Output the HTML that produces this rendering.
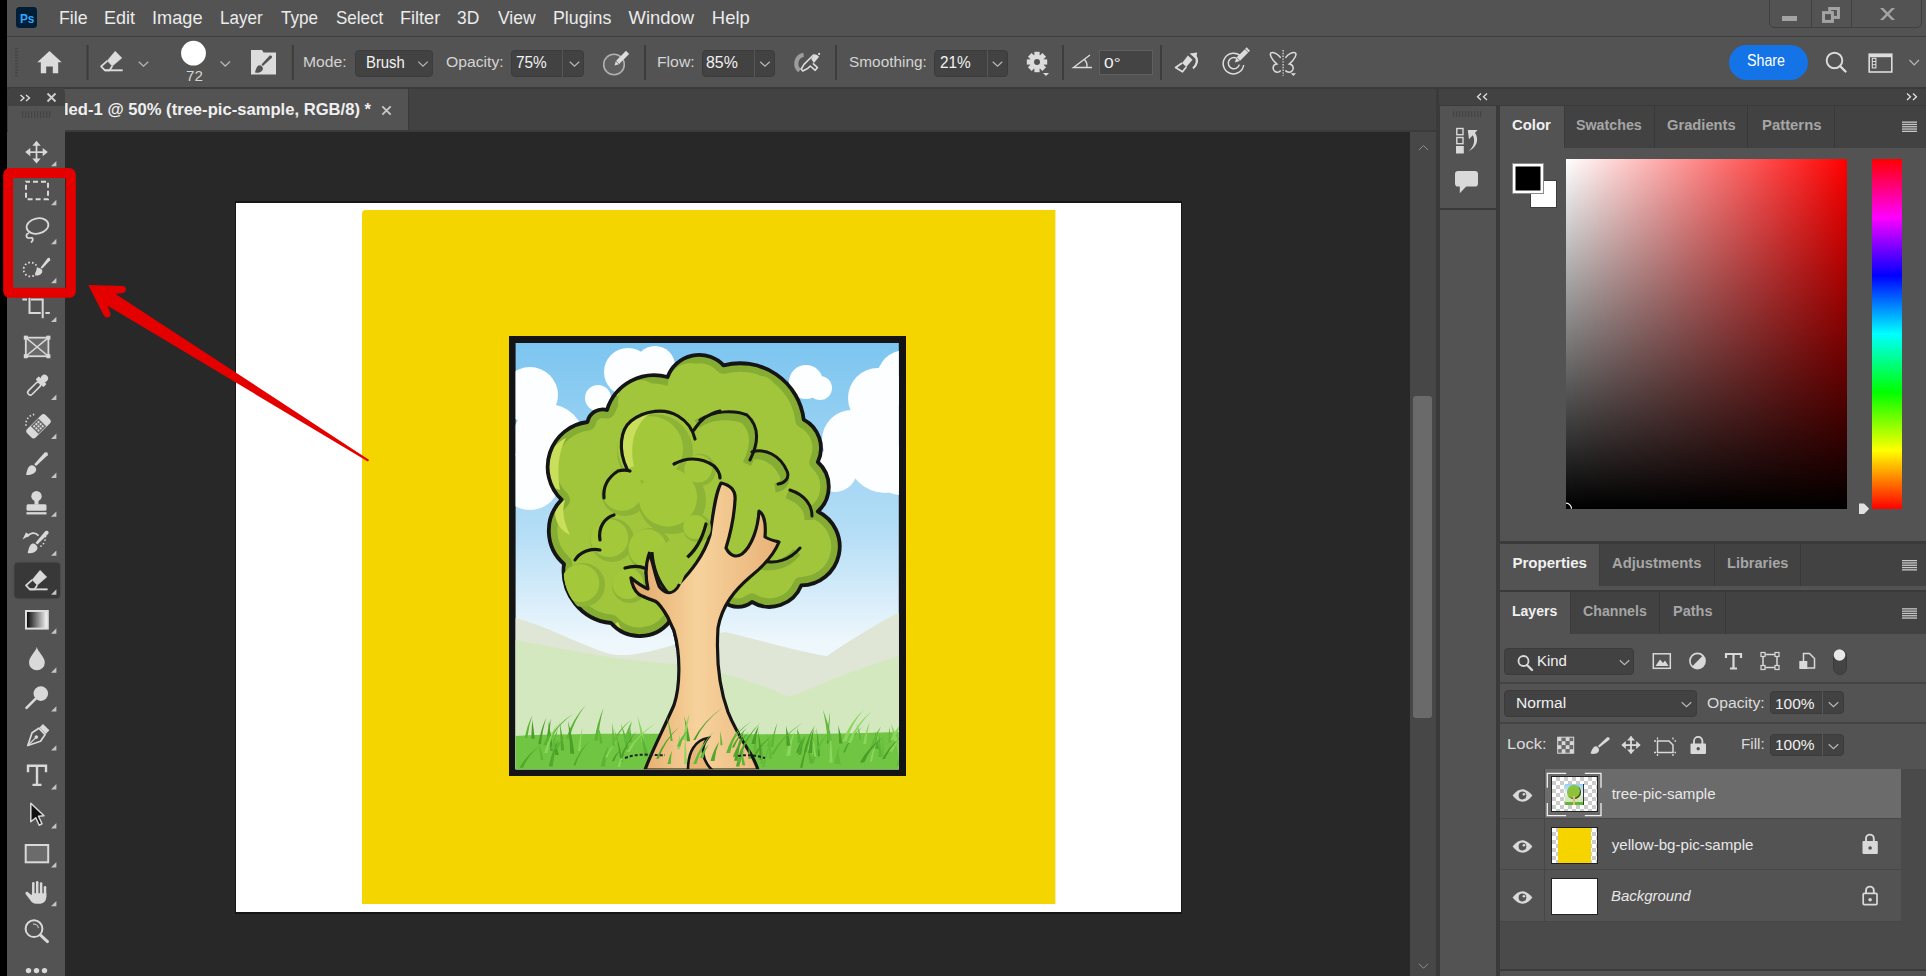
<!DOCTYPE html>
<html><head><meta charset="utf-8">
<style>
*{margin:0;padding:0;box-sizing:border-box}
html,body{width:1926px;height:976px;overflow:hidden;background:#535353}
body{position:relative;font-family:"Liberation Sans",sans-serif;color:#e6e6e6}
.a{position:absolute}
.t{position:absolute;white-space:nowrap;line-height:1}
svg.o{position:absolute;left:0;top:0;width:1926px;height:976px;overflow:visible}
</style></head><body>
<div class="a" style="left:0;top:0;width:7px;height:976px;background:#000"></div>
<div class="a" style="left:7px;top:0;width:1919px;height:36px;background:#535353"></div>
<div class="a" style="left:7px;top:36px;width:1919px;height:1px;background:#3e3e3e"></div>
<div class="a" style="left:7px;top:37px;width:1919px;height:50px;background:#535353"></div>
<div class="a" style="left:7px;top:87px;width:1919px;height:2px;background:#3a3a3a"></div>
<div class="a" style="left:7px;top:89px;width:1429px;height:41px;background:#424242"></div>
<div class="a" style="left:7px;top:130px;width:1429px;height:2px;background:#3b3b3b"></div>
<div class="a" style="left:62px;top:89px;width:346px;height:41px;background:#535353"></div>
<div class="a" style="left:408px;top:89px;width:1px;height:41px;background:#3a3a3a"></div>
<div class="a" style="left:65px;top:132px;width:1345px;height:844px;background:#282828"></div>
<div class="a" style="left:1410px;top:132px;width:26px;height:844px;background:#474747"></div>
<div class="a" style="left:1413px;top:396px;width:19px;height:322px;background:#6a6a6a;border-radius:3px"></div>
<div class="a" style="left:1436px;top:89px;width:3px;height:887px;background:#3a3a3a"></div>
<div class="t" style="left:58.98px;top:9.05px;font-size:18.44px;font-weight:normal;color:#ebebeb;transform:scaleX(0.9614);transform-origin:0 0;">File</div>
<div class="t" style="left:104.07px;top:9.05px;font-size:18.44px;font-weight:normal;color:#ebebeb;transform:scaleX(0.9726);transform-origin:0 0;">Edit</div>
<div class="t" style="left:152.16px;top:9.05px;font-size:18.44px;font-weight:normal;color:#ebebeb;transform:scaleX(0.9854);transform-origin:0 0;">Image</div>
<div class="t" style="left:219.94px;top:9.05px;font-size:18.44px;font-weight:normal;color:#ebebeb;transform:scaleX(0.9234);transform-origin:0 0;">Layer</div>
<div class="t" style="left:280.86px;top:9.05px;font-size:18.44px;font-weight:normal;color:#ebebeb;transform:scaleX(0.9272);transform-origin:0 0;">Type</div>
<div class="t" style="left:335.82px;top:9.05px;font-size:18.44px;font-weight:normal;color:#ebebeb;transform:scaleX(0.9200);transform-origin:0 0;">Select</div>
<div class="t" style="left:399.75px;top:9.05px;font-size:18.44px;font-weight:normal;color:#ebebeb;transform:scaleX(0.9808);transform-origin:0 0;">Filter</div>
<div class="t" style="left:457.38px;top:9.05px;font-size:18.44px;font-weight:normal;color:#ebebeb;transform:scaleX(0.9444);transform-origin:0 0;">3D</div>
<div class="t" style="left:498.20px;top:9.05px;font-size:18.44px;font-weight:normal;color:#ebebeb;transform:scaleX(0.9505);transform-origin:0 0;">View</div>
<div class="t" style="left:552.68px;top:9.05px;font-size:18.44px;font-weight:normal;color:#ebebeb;transform:scaleX(0.9651);transform-origin:0 0;">Plugins</div>
<div class="t" style="left:628.60px;top:9.05px;font-size:18.44px;font-weight:normal;color:#ebebeb;">Window</div>
<div class="t" style="left:711.83px;top:9.05px;font-size:18.44px;font-weight:normal;color:#ebebeb;">Help</div>
<div class="a" style="left:16px;top:7px;width:21px;height:20.5px;background:#001e36;border-radius:3.5px"></div>
<div class="t" style="left:19.99px;top:11.67px;font-size:13.41px;font-weight:bold;color:#31a8ff;transform:scaleX(0.8802);transform-origin:0 0;">Ps</div>
<div class="a" style="left:1769px;top:-4px;width:153px;height:32px;border:1.5px solid #404040;border-radius:5px"></div>
<div class="a" style="left:1810.5px;top:0;width:1.2px;height:27px;background:#404040"></div>
<div class="a" style="left:1851.2px;top:0;width:1.2px;height:27px;background:#404040"></div>
<div class="a" style="left:1782px;top:16px;width:15px;height:5px;background:#a3a3a3"></div>
<div class="a" style="left:355px;top:50px;width:78.0px;height:26.5px;background:#424242;border:1px solid #3b3b3b;border-radius:4px"></div>
<div class="a" style="left:510.7px;top:50px;width:73.5px;height:26.5px;background:#424242;border:1px solid #3b3b3b;border-radius:4px"></div>
<div class="a" style="left:562.4px;top:50px;width:1px;height:26.5px;background:#565656"></div>
<div class="a" style="left:701.7px;top:50px;width:73.7px;height:26.5px;background:#424242;border:1px solid #3b3b3b;border-radius:4px"></div>
<div class="a" style="left:753.5px;top:50px;width:1px;height:26.5px;background:#565656"></div>
<div class="a" style="left:933.5px;top:50px;width:74.8px;height:26.5px;background:#424242;border:1px solid #3b3b3b;border-radius:4px"></div>
<div class="a" style="left:986.5px;top:50px;width:1px;height:26.5px;background:#565656"></div>
<div class="a" style="left:1099px;top:50px;width:54px;height:24.5px;background:#444;border:1px solid #5f5f5f"></div>
<div class="t" style="left:185.74px;top:69.39px;font-size:14.66px;font-weight:normal;color:#d4d4d4;transform:scaleX(1.0402);transform-origin:0 0;">72</div>
<div class="t" style="left:302.74px;top:53.99px;font-size:15.36px;font-weight:normal;color:#d4d4d4;transform:scaleX(1.0219);transform-origin:0 0;">Mode:</div>
<div class="t" style="left:365.81px;top:54.19px;font-size:16.06px;font-weight:normal;color:#f2f2f2;transform:scaleX(0.9253);transform-origin:0 0;">Brush</div>
<div class="t" style="left:446.17px;top:53.99px;font-size:15.36px;font-weight:normal;color:#d4d4d4;transform:scaleX(1.0223);transform-origin:0 0;">Opacity:</div>
<div class="t" style="left:515.63px;top:54.55px;font-size:15.64px;font-weight:normal;color:#f2f2f2;transform:scaleX(0.9844);transform-origin:0 0;">75%</div>
<div class="t" style="left:656.74px;top:53.99px;font-size:15.36px;font-weight:normal;color:#d4d4d4;transform:scaleX(1.0256);transform-origin:0 0;">Flow:</div>
<div class="t" style="left:706.16px;top:54.55px;font-size:15.64px;font-weight:normal;color:#f2f2f2;transform:scaleX(1.0157);transform-origin:0 0;">85%</div>
<div class="t" style="left:849.09px;top:53.99px;font-size:15.36px;font-weight:normal;color:#d4d4d4;">Smoothing:</div>
<div class="t" style="left:939.63px;top:54.55px;font-size:15.64px;font-weight:normal;color:#f2f2f2;transform:scaleX(0.9844);transform-origin:0 0;">21%</div>
<div class="t" style="left:1104.48px;top:54.59px;font-size:15.36px;font-weight:normal;color:#f2f2f2;transform:scaleX(1.1272);transform-origin:0 0;">0°</div>
<div class="a" style="left:1729px;top:45px;width:79px;height:35px;background:#1473e6;border-radius:17.5px"></div>
<div class="t" style="left:1747.43px;top:53.33px;font-size:15.78px;font-weight:normal;color:#fff;transform:scaleX(0.9044);transform-origin:0 0;">Share</div>
<div class="t" style="left:63.50px;top:100.71px;font-size:17.32px;font-weight:bold;color:#efefef;transform:scaleX(0.9598);transform-origin:0 0;">led-1 @ 50% (tree-pic-sample, RGB/8) *</div>
<div class="a" style="left:8px;top:88px;width:57.4px;height:888px;background:#535353;border-radius:5px 5px 0 0"></div>
<div class="a" style="left:8px;top:88px;width:57.4px;height:18px;background:#424242;border-radius:5px 5px 0 0"></div>
<svg class="o" viewBox="0 0 1926 976"><path d="M20.5 95 L24 98 L20.5 101 M26 95 L29.5 98 L26 101" stroke="#e0e0e0" stroke-width="1.3" fill="none"/><path d="M47.5 93.5 L55.5 101.5 M55.5 93.5 L47.5 101.5" stroke="#d0d0d0" stroke-width="1.8" fill="none"/><rect x="22" y="111" width="1.2" height="7" fill="#444"/><rect x="25" y="111" width="1.2" height="7" fill="#444"/><rect x="28" y="111" width="1.2" height="7" fill="#444"/><rect x="31" y="111" width="1.2" height="7" fill="#444"/><rect x="34" y="111" width="1.2" height="7" fill="#444"/><rect x="37" y="111" width="1.2" height="7" fill="#444"/><rect x="40" y="111" width="1.2" height="7" fill="#444"/><rect x="43" y="111" width="1.2" height="7" fill="#444"/><rect x="46" y="111" width="1.2" height="7" fill="#444"/><rect x="49" y="111" width="1.2" height="7" fill="#444"/><rect x="15" y="48" width="3" height="1.6" fill="#464646"/><rect x="15" y="51" width="3" height="1.6" fill="#464646"/><rect x="15" y="54" width="3" height="1.6" fill="#464646"/><rect x="15" y="57" width="3" height="1.6" fill="#464646"/><rect x="15" y="60" width="3" height="1.6" fill="#464646"/><rect x="15" y="63" width="3" height="1.6" fill="#464646"/><rect x="15" y="66" width="3" height="1.6" fill="#464646"/><rect x="15" y="69" width="3" height="1.6" fill="#464646"/><rect x="15" y="72" width="3" height="1.6" fill="#464646"/><rect x="15" y="75" width="3" height="1.6" fill="#464646"/><g fill="#d9d9d9"><rect x="28" y="151.29999999999998" width="17" height="1.7"/><rect x="35.65" y="142.6" width="1.7" height="19"/><polygon points="36.5,140.7 32.3,145.79999999999998 40.7,145.79999999999998"/><polygon points="36.5,163.6 32.3,158.5 40.7,158.5"/><polygon points="25.2,152.1 30.3,147.9 30.3,156.29999999999998"/><polygon points="47.8,152.1 42.7,147.9 42.7,156.29999999999998"/></g><polygon points="51,166.29999999999998 56.4,166.29999999999998 56.4,160.89999999999998" fill="#c4c4c4"/><rect x="26" y="181.65" width="22" height="17.6" fill="none" stroke="#d9d9d9" stroke-width="2" stroke-dasharray="5 3" stroke-dashoffset="1"/><polygon points="51,205.25 56.4,205.25 56.4,199.85" fill="#c4c4c4"/><g fill="none" stroke="#d9d9d9" stroke-width="1.8"><ellipse cx="37.5" cy="226.0" rx="11" ry="7.6" transform="rotate(-12 37.5 226.0)"/><path d="M29 233.0 C25 234.0 26 239.0 30 238.0 C33 237.0 34 240.0 31 242.5"/></g><polygon points="51,244.2 56.4,244.2 56.4,238.79999999999998" fill="#c4c4c4"/><circle cx="30.6" cy="269.45" r="7" fill="none" stroke="#d9d9d9" stroke-width="1.8" stroke-dasharray="1.6 2.2"/><g transform="translate(35 275.45) rotate(40.5) scale(0.74)"><path d="M0 0 C3 -2 5.2 -5 4.8 -8.6 C4.5 -10.8 2.8 -12 0.6 -12 C-2.2 -12 -3.6 -10.3 -3.4 -8 C-3.1 -5 -1.4 -2.6 0 0 Z" fill="#d9d9d9"/><path d="M-1.3 -13.2 L-2.1 -29 Q0 -32.6 2.1 -29 L1.3 -13.2 Z" fill="#d9d9d9"/></g><polygon points="51,283.15 56.4,283.15 56.4,277.75" fill="#c4c4c4"/><path d="M22.4 299.5 H27 M29.5 297.5 V313.0 H40.8 M31 299.5 H42.7 V318.29999999999995 M45.4 313.0 H49.8" fill="none" stroke="#d9d9d9" stroke-width="2"/><polygon points="51,322.09999999999997 56.4,322.09999999999997 56.4,316.7" fill="#c4c4c4"/><rect x="25.8" y="337.65000000000003" width="22.6" height="18.6" fill="#6a6a6a" stroke="#d9d9d9" stroke-width="1.8"/><path d="M25.8 337.65000000000003 L48.4 356.25 M48.4 337.65000000000003 L25.8 356.25" stroke="#d9d9d9" stroke-width="1.5"/><rect x="23.8" y="335.65000000000003" width="4" height="4" fill="#d9d9d9"/><rect x="46.4" y="335.65000000000003" width="4" height="4" fill="#d9d9d9"/><rect x="23.8" y="354.25" width="4" height="4" fill="#d9d9d9"/><rect x="46.4" y="354.25" width="4" height="4" fill="#d9d9d9"/><g transform="translate(37 385.8) rotate(45)"><circle cx="0" cy="-10.5" r="3.6" fill="#d9d9d9"/><rect x="-5.5" y="-8" width="11" height="4.5" rx="1" fill="#d9d9d9"/><rect x="-2.6" y="-4" width="5.2" height="16" rx="2.6" fill="none" stroke="#d9d9d9" stroke-width="1.6"/></g><polygon points="51,400.0 56.4,400.0 56.4,394.6" fill="#c4c4c4"/><g transform="translate(38.5 426.25) rotate(45)"><rect x="-6" y="-13" width="12" height="26" rx="3" fill="#d9d9d9"/><rect x="-5.5" y="-5.5" width="11" height="11" fill="#6a6a6a"/><circle cx="-3" cy="-3" r="1.1" fill="#d9d9d9"/><circle cx="-3" cy="0" r="1.1" fill="#d9d9d9"/><circle cx="-3" cy="3" r="1.1" fill="#d9d9d9"/><circle cx="0" cy="-3" r="1.1" fill="#d9d9d9"/><circle cx="0" cy="0" r="1.1" fill="#d9d9d9"/><circle cx="0" cy="3" r="1.1" fill="#d9d9d9"/><circle cx="3" cy="-3" r="1.1" fill="#d9d9d9"/><circle cx="3" cy="0" r="1.1" fill="#d9d9d9"/><circle cx="3" cy="3" r="1.1" fill="#d9d9d9"/></g><path d="M26 425.75 A 10 10 0 0 1 35 414.25" fill="none" stroke="#d9d9d9" stroke-width="1.6" stroke-dasharray="1.5 2"/><polygon points="51,438.95 56.4,438.95 56.4,433.55" fill="#c4c4c4"/><g transform="translate(26 474.70000000000005) rotate(44) scale(1.0)"><path d="M0 0 C3 -2 5.2 -5 4.8 -8.6 C4.5 -10.8 2.8 -12 0.6 -12 C-2.2 -12 -3.6 -10.3 -3.4 -8 C-3.1 -5 -1.4 -2.6 0 0 Z" fill="#d9d9d9"/><path d="M-1.3 -13.2 L-2.1 -29 Q0 -32.6 2.1 -29 L1.3 -13.2 Z" fill="#d9d9d9"/></g><polygon points="51,477.90000000000003 56.4,477.90000000000003 56.4,472.50000000000006" fill="#c4c4c4"/><g fill="#d9d9d9"><circle cx="36.5" cy="496.15" r="5.2"/><rect x="34.5" y="499.65" width="4" height="5"/><rect x="26.5" y="504.15" width="20" height="6.5" rx="1.5"/><rect x="26.5" y="512.15" width="20" height="2.3"/></g><polygon points="51,516.85 56.4,516.85 56.4,511.45000000000005" fill="#c4c4c4"/><g transform="translate(27.7 553.0) rotate(43) scale(0.97)"><path d="M0 0 C3 -2 5.2 -5 4.8 -8.6 C4.5 -10.8 2.8 -12 0.6 -12 C-2.2 -12 -3.6 -10.3 -3.4 -8 C-3.1 -5 -1.4 -2.6 0 0 Z" fill="#d9d9d9"/><path d="M-1.3 -13.2 L-2.1 -29 Q0 -32.6 2.1 -29 L1.3 -13.2 Z" fill="#d9d9d9"/></g><path d="M38.5 535.6 C35 531.6 30 532.6 27 536.6" fill="none" stroke="#d9d9d9" stroke-width="1.8"/><polygon points="22.5,539.6 30,535.1 26,532.6" fill="#d9d9d9"/><circle cx="45.5" cy="536.6" r="0.9" fill="#d9d9d9"/><circle cx="45" cy="540.1" r="0.9" fill="#d9d9d9"/><circle cx="43.5" cy="543.6" r="0.9" fill="#d9d9d9"/><circle cx="41" cy="546.1" r="0.9" fill="#d9d9d9"/><polygon points="51,555.8000000000001 56.4,555.8000000000001 56.4,550.4000000000001" fill="#c4c4c4"/><rect x="14" y="562.1500000000001" width="46.5" height="36.6" rx="4" fill="#383838" stroke="#4a4a4a" stroke-width="1"/><g transform="translate(25.2 570.35) scale(1.0)"><path d="M14.9 0 L21.5 6.7 L12 14.8 L7 9.5 Z" fill="#d9d9d9" stroke="#d9d9d9" stroke-width="0.6" stroke-linejoin="round"/><path d="M7 9.5 L0.8 15.1 L4.6 19 L9.3 19 L12 14.8" fill="none" stroke="#d9d9d9" stroke-width="1.8" stroke-linejoin="round"/><path d="M4.6 19 H22.4" stroke="#d9d9d9" stroke-width="1.9"/></g><polygon points="51,594.7500000000001 56.4,594.7500000000001 56.4,589.3500000000001" fill="#c4c4c4"/><defs><linearGradient id="gr1" x1="0" x2="1" y1="0" y2="0"><stop offset="0" stop-color="#000"/><stop offset="1" stop-color="#fff"/></linearGradient></defs><rect x="26" y="611.0" width="21.8" height="17.6" fill="url(#gr1)" stroke="#dedede" stroke-width="2"/><polygon points="51,633.7 56.4,633.7 56.4,628.3000000000001" fill="#c4c4c4"/><path d="M36.8 646.95 C37.5 651.45 44.8 656.45 44.8 662.45 A7.9 7.9 0 0 1 29 662.45 C29 656.45 36 651.45 36.8 646.95Z" fill="#d9d9d9"/><polygon points="51,672.6500000000001 56.4,672.6500000000001 56.4,667.2500000000001" fill="#c4c4c4"/><circle cx="40.8" cy="693.6000000000001" r="7.3" fill="#d9d9d9"/><path d="M35.5 698.9000000000001 L26.5 707.9000000000001" stroke="#d9d9d9" stroke-width="2.6" stroke-linecap="round"/><polygon points="51,711.6000000000001 56.4,711.6000000000001 56.4,706.2000000000002" fill="#c4c4c4"/><g transform="translate(37 736.35) rotate(45)"><rect x="-4.5" y="-13" width="9" height="5" fill="#d9d9d9"/><path d="M-4.5 -7 L4.5 -7 L6 1 L0 13 L-6 1 Z" fill="none" stroke="#d9d9d9" stroke-width="1.7" stroke-linejoin="round"/><circle cx="0" cy="1" r="1.8" fill="#d9d9d9"/><path d="M0 1 V13" stroke="#d9d9d9" stroke-width="1.2"/></g><polygon points="51,750.5500000000001 56.4,750.5500000000001 56.4,745.1500000000001" fill="#c4c4c4"/><path d="M28 772.3000000000001 V765.7 H46 V772.3000000000001 M37 765.7 V784.9000000000001 M32.5 784.9000000000001 H41.5" fill="none" stroke="#d9d9d9" stroke-width="2.4"/><polygon points="51,789.5000000000001 56.4,789.5000000000001 56.4,784.1000000000001" fill="#c4c4c4"/><path d="M30.8 803.2500000000001 L44 815.7500000000001 L38.5 816.2500000000001 L42 823.7500000000001 L39.2 825.2500000000001 L35.8 817.7500000000001 L30.8 821.7500000000001 Z" fill="#111" stroke="#d9d9d9" stroke-width="1.5" stroke-linejoin="round"/><polygon points="51,828.4500000000002 56.4,828.4500000000002 56.4,823.0500000000002" fill="#c4c4c4"/><rect x="25.7" y="845.0" width="22.5" height="17.3" fill="#6b6b6b" stroke="#d9d9d9" stroke-width="2"/><polygon points="51,867.4000000000001 56.4,867.4000000000001 56.4,862.0000000000001" fill="#c4c4c4"/><g stroke="#d9d9d9" stroke-width="2.5" stroke-linecap="round"><path d="M33.3 883.1500000000001 V895.1500000000001"/><path d="M37.2 882.1500000000001 V895.1500000000001"/><path d="M41.1 883.5500000000001 V895.1500000000001"/><path d="M45 887.3500000000001 V896.1500000000001"/></g><path d="M32 893.1500000000001 H46.3 V896.6500000000001 C46.3 901.1500000000001 43.5 903.7500000000001 39 903.7500000000001 H36.5 C33.5 903.7500000000001 31.5 902.1500000000001 30 899.7500000000001 L25.6 893.95 C25 892.1500000000001 26.6 891.1500000000001 28 892.1500000000001 L31.5 895.1500000000001 Z" fill="#d9d9d9"/><polygon points="51,906.3500000000001 56.4,906.3500000000001 56.4,900.9500000000002" fill="#c4c4c4"/><circle cx="34" cy="928.7" r="8.4" fill="none" stroke="#d9d9d9" stroke-width="2"/><path d="M40.5 935.1 L47.5 941.6" stroke="#d9d9d9" stroke-width="3" stroke-linecap="round"/><path d="M33 924.1 A5 5 0 0 1 38.5 928.1" fill="none" stroke="#d9d9d9" stroke-width="1"/><circle cx="28.5" cy="970.6" r="2.7" fill="#d9d9d9"/><circle cx="36.5" cy="970.6" r="2.7" fill="#d9d9d9"/><circle cx="44.5" cy="970.6" r="2.7" fill="#d9d9d9"/></svg>
<svg class="o" viewBox="0 0 1926 976"><rect x="86.5" y="45" width="2" height="35" fill="#3d3d3d"/><rect x="291.8" y="45" width="2" height="35" fill="#3d3d3d"/><rect x="644" y="45" width="2" height="35" fill="#3d3d3d"/><rect x="835" y="45" width="2" height="35" fill="#3d3d3d"/><rect x="1062" y="45" width="2" height="35" fill="#3d3d3d"/><rect x="1160" y="45" width="2" height="35" fill="#3d3d3d"/><path d="M37.3 62.3 L49.5 51 L61.7 62.3 L58.2 62.3 L58.2 73.2 L52.8 73.2 L52.8 66.5 L46.2 66.5 L46.2 73.2 L40.8 73.2 L40.8 62.3 Z" fill="#dcdcdc"/><g transform="translate(100.3 51.3) scale(1.0)"><path d="M14.9 0 L21.5 6.7 L12 14.8 L7 9.5 Z" fill="#dcdcdc" stroke="#dcdcdc" stroke-width="0.6" stroke-linejoin="round"/><path d="M7 9.5 L0.8 15.1 L4.6 19 L9.3 19 L12 14.8" fill="none" stroke="#dcdcdc" stroke-width="1.8" stroke-linejoin="round"/><path d="M4.6 19 H22.4" stroke="#dcdcdc" stroke-width="1.9"/></g><path d="M138.75 61.75 L143.5 66.25 L148.25 61.75" fill="none" stroke="#b8b8b8" stroke-width="1.2"/><circle cx="193.5" cy="53.2" r="12.4" fill="#fff"/><path d="M220.55 61.55 L225.3 66.05 L230.05 61.55" fill="none" stroke="#b8b8b8" stroke-width="1.2"/><path d="M251 50 H262 L263.5 52.5 H276 V74.6 H251 Z" fill="#dcdcdc"/><g transform="translate(255 72.5) rotate(45) scale(0.77)"><path d="M0 0 C3 -2 5.2 -5 4.8 -8.6 C4.5 -10.8 2.8 -12 0.6 -12 C-2.2 -12 -3.6 -10.3 -3.4 -8 C-3.1 -5 -1.4 -2.6 0 0 Z" fill="#535353"/><path d="M-1.3 -13.2 L-2.1 -29 Q0 -32.6 2.1 -29 L1.3 -13.2 Z" fill="#535353"/></g><path d="M418.25 61.65 L423 66.15 L427.75 61.65" fill="none" stroke="#b8b8b8" stroke-width="1.2"/><path d="M569.75 61.75 L574.5 66.25 L579.25 61.75" fill="none" stroke="#b8b8b8" stroke-width="1.2"/><path d="M760.25 61.75 L765 66.25 L769.75 61.75" fill="none" stroke="#b8b8b8" stroke-width="1.2"/><path d="M992.75 61.75 L997.5 66.25 L1002.25 61.75" fill="none" stroke="#b8b8b8" stroke-width="1.2"/><circle cx="614" cy="64.5" r="10.3" fill="#5f5f5f" stroke="#b0b0b0" stroke-width="1.6"/><g transform="translate(620.5 59.5) rotate(45)"><rect x="-2.2" y="-10" width="4.4" height="14" fill="#dcdcdc"/><polygon points="-2.2,4.5 2.2,4.5 0,8.5" fill="#dcdcdc"/></g><path d="M803.6 54.8 A 9 9 0 0 0 799.6 70.6" fill="none" stroke="#9c9c9c" stroke-width="4.2"/><path d="M811.2 59.1 L814.5 54.2 Q817 54 819.1 56.8 L813.9 63.1 Z" fill="#dcdcdc"/><circle cx="819.1" cy="53.9" r="1.1" fill="#dcdcdc"/><path d="M813.9 54.5 L804 64.4 L801.2 69 L802.8 71 L808 68.2 L810.3 66 L815.2 70.3 L817.5 67.6 L812.9 63.4" fill="none" stroke="#dcdcdc" stroke-width="1.6" stroke-linejoin="round"/><rect x="1034.4" y="51.8" width="5.2" height="5" transform="rotate(0 1037 62)" fill="#dcdcdc"/><rect x="1034.4" y="51.8" width="5.2" height="5" transform="rotate(45 1037 62)" fill="#dcdcdc"/><rect x="1034.4" y="51.8" width="5.2" height="5" transform="rotate(90 1037 62)" fill="#dcdcdc"/><rect x="1034.4" y="51.8" width="5.2" height="5" transform="rotate(135 1037 62)" fill="#dcdcdc"/><rect x="1034.4" y="51.8" width="5.2" height="5" transform="rotate(180 1037 62)" fill="#dcdcdc"/><rect x="1034.4" y="51.8" width="5.2" height="5" transform="rotate(225 1037 62)" fill="#dcdcdc"/><rect x="1034.4" y="51.8" width="5.2" height="5" transform="rotate(270 1037 62)" fill="#dcdcdc"/><rect x="1034.4" y="51.8" width="5.2" height="5" transform="rotate(315 1037 62)" fill="#dcdcdc"/><circle cx="1037" cy="62" r="7.2" fill="#dcdcdc"/><circle cx="1037" cy="62" r="3" fill="#535353"/><polygon points="1043,73 1049,73 1046,76" fill="#dcdcdc"/><path d="M1090 55 L1073.5 67.5 H1092 M1084.5 59.5 A 9 9 0 0 1 1086.8 67.5" fill="none" stroke="#dcdcdc" stroke-width="1.4"/><path d="M1182.1 62.9 L1187.9 55.5 L1192.5 59.8 L1186.3 67 Z" fill="#dcdcdc"/><path d="M1182.1 62.9 L1175.6 67.6 L1182.5 71.8 L1186.3 67" fill="none" stroke="#dcdcdc" stroke-width="1.8" stroke-linejoin="round"/><path d="M1193 68.3 C1197 65 1198.5 59.5 1195 56" fill="none" stroke="#dcdcdc" stroke-width="2.2"/><polygon points="1189.6,53.4 1197.2,52.5 1196,59" fill="#dcdcdc"/><path d="M1241 56.5 A10.3 10.3 0 1 0 1243.7 65" fill="none" stroke="#dcdcdc" stroke-width="1.5"/><path d="M1236.5 58.2 A5.6 5.6 0 1 0 1239.3 64.6" fill="none" stroke="#dcdcdc" stroke-width="1.5"/><g transform="translate(1240.2 57.2) rotate(45)"><rect x="-2.4" y="-9" width="4.8" height="11.5" fill="#dcdcdc"/><rect x="-2.4" y="-11.5" width="4.8" height="2" fill="#dcdcdc"/><polygon points="-2.4,3 2.4,3 0,7.6" fill="#dcdcdc"/></g><path d="M1280.7 57.8 C1278 54 1273 51.5 1271 52.8 C1269.5 54 1271 59 1276.7 63.9 C1272 64.5 1272.5 70 1275 71.5 C1277 72.8 1279.5 72 1280.7 70.5 M1285.4 57.8 C1288 54 1293 51.5 1295.3 52.8 C1297 54 1295 59 1289.5 63.9 C1294 64.5 1294 70 1291.5 71.5 C1289.5 72.8 1286.5 72 1285.4 70.5" fill="none" stroke="#dcdcdc" stroke-width="1.5"/><path d="M1283.1 50 V76" stroke="#dcdcdc" stroke-width="1.3" stroke-dasharray="1.4 1.4"/><polygon points="1290.8,73.3 1296,73.3 1293.4,76" fill="#dcdcdc"/><circle cx="1834.5" cy="60.5" r="7.8" fill="none" stroke="#dcdcdc" stroke-width="1.9"/><path d="M1840 66 L1845.5 71.5" stroke="#dcdcdc" stroke-width="2.4" stroke-linecap="round"/><rect x="1869.2" y="54.2" width="22.6" height="17.8" fill="none" stroke="#dcdcdc" stroke-width="1.6"/><rect x="1869.2" y="54.2" width="22.6" height="3" fill="#dcdcdc"/><rect x="1872.3" y="58.3" width="3.6" height="9.6" fill="none" stroke="#dcdcdc" stroke-width="1.1"/><path d="M1872.3 61.5 H1875.9 M1872.3 64.7 H1875.9" stroke="#dcdcdc" stroke-width="1"/><path d="M1909.45 60.0 L1914.2 65.0 L1918.95 60.0" fill="none" stroke="#b8b8b8" stroke-width="1.2"/><rect x="1829.7" y="8.5" width="8.7" height="8.9" fill="none" stroke="#a3a3a3" stroke-width="3"/><rect x="1823.5" y="12.6" width="8.9" height="8.8" fill="#535353" stroke="#a3a3a3" stroke-width="3"/><polygon points="1880,8 1883.3,8 1887.5,12.3 1891.7,8 1895,8 1889.2,14 1895,20 1891.7,20 1887.5,15.7 1883.3,20 1880,20 1885.8,14" fill="#a3a3a3"/><path d="M382.3 106.3 L390.7 114.7 M390.7 106.3 L382.3 114.7" stroke="#c8c8c8" stroke-width="1.8"/><path d="M1419 150 L1423.5 145.5 L1428 150" fill="none" stroke="#8f8f8f" stroke-width="1"/><path d="M1419.0 963.75 L1423.5 968.25 L1428.0 963.75" fill="none" stroke="#8f8f8f" stroke-width="1"/></svg>
<div class="a" style="left:1439px;top:89px;width:487px;height:887px;background:#3a3a3a;"></div>
<div class="a" style="left:1439px;top:89px;width:487px;height:16px;background:#424242;"></div>
<div class="a" style="left:1439.5px;top:106px;width:56px;height:102px;background:#535353;"></div>
<div class="a" style="left:1439.5px;top:210px;width:56px;height:766px;background:#535353;"></div>
<div class="a" style="left:1499.5px;top:106px;width:426px;height:435px;background:#535353;"></div>
<div class="a" style="left:1499.5px;top:106px;width:426px;height:41.5px;background:#424242;"></div>
<div class="a" style="left:1499.5px;top:106px;width:64px;height:41.5px;background:#535353;"></div>
<div class="a" style="left:1499.5px;top:544px;width:426px;height:46px;background:#535353;"></div>
<div class="a" style="left:1499.5px;top:544px;width:426px;height:41.6px;background:#424242;"></div>
<div class="a" style="left:1499.5px;top:544px;width:99.5px;height:41.6px;background:#535353;"></div>
<div class="a" style="left:1499.5px;top:592.4px;width:426px;height:377px;background:#535353;"></div>
<div class="a" style="left:1499.5px;top:592.4px;width:426px;height:41.2px;background:#424242;"></div>
<div class="a" style="left:1499.5px;top:592.4px;width:71px;height:41.2px;background:#535353;"></div>
<div class="a" style="left:1499.5px;top:971px;width:426px;height:5px;background:#535353;"></div>
<div class="a" style="left:1653.5px;top:106px;width:1px;height:41.5px;background:#383838;"></div>
<div class="a" style="left:1747.4px;top:106px;width:1px;height:41.5px;background:#383838;"></div>
<div class="a" style="left:1833.7px;top:106px;width:1px;height:41.5px;background:#383838;"></div>
<div class="a" style="left:1713.7px;top:544px;width:1px;height:41.5px;background:#383838;"></div>
<div class="a" style="left:1800.2px;top:544px;width:1px;height:41.5px;background:#383838;"></div>
<div class="a" style="left:1659.3px;top:592.4px;width:1px;height:41.5px;background:#383838;"></div>
<div class="a" style="left:1725.4px;top:592.4px;width:1px;height:41.5px;background:#383838;"></div>
<div class="a" style="left:1563.6px;top:106px;width:1px;height:41.5px;background:#3c3c3c;"></div>
<div class="a" style="left:1599px;top:544px;width:1px;height:41.5px;background:#3c3c3c;"></div>
<div class="a" style="left:1570.4px;top:592.4px;width:1px;height:41.5px;background:#3c3c3c;"></div>
<div class="t" style="left:1512.01px;top:116.93px;font-size:15.08px;font-weight:bold;color:#f0f0f0;transform:scaleX(0.9860);transform-origin:0 0;">Color</div>
<div class="t" style="left:1575.71px;top:116.93px;font-size:15.08px;font-weight:bold;color:#a6a6a6;transform:scaleX(0.9456);transform-origin:0 0;">Swatches</div>
<div class="t" style="left:1667.11px;top:116.93px;font-size:15.08px;font-weight:bold;color:#a6a6a6;transform:scaleX(0.9746);transform-origin:0 0;">Gradients</div>
<div class="t" style="left:1761.51px;top:116.93px;font-size:15.08px;font-weight:bold;color:#a6a6a6;transform:scaleX(0.9863);transform-origin:0 0;">Patterns</div>
<div class="t" style="left:1512.40px;top:554.93px;font-size:15.08px;font-weight:bold;color:#f0f0f0;">Properties</div>
<div class="t" style="left:1612.00px;top:554.93px;font-size:15.08px;font-weight:bold;color:#a6a6a6;transform:scaleX(0.9801);transform-origin:0 0;">Adjustments</div>
<div class="t" style="left:1726.83px;top:554.93px;font-size:15.08px;font-weight:bold;color:#a6a6a6;transform:scaleX(0.9636);transform-origin:0 0;">Libraries</div>
<div class="t" style="left:1512.46px;top:603.13px;font-size:15.08px;font-weight:bold;color:#f0f0f0;transform:scaleX(0.9303);transform-origin:0 0;">Layers</div>
<div class="t" style="left:1583.43px;top:603.13px;font-size:15.08px;font-weight:bold;color:#a6a6a6;transform:scaleX(0.9394);transform-origin:0 0;">Channels</div>
<div class="t" style="left:1672.93px;top:603.13px;font-size:15.08px;font-weight:bold;color:#a6a6a6;transform:scaleX(0.9615);transform-origin:0 0;">Paths</div>
<div class="a" style="left:1566px;top:158.7px;width:281.4px;height:350px;background:#f00;background:linear-gradient(to top,#000,rgba(0,0,0,0)),linear-gradient(to right,#fff,#f00)"></div>
<div class="a" style="left:1872px;top:158.7px;width:29.5px;height:350px;background:#f00;background:linear-gradient(to bottom,#f00 0%,#f0f 16.67%,#00f 33.33%,#0ff 50%,#0f0 66.67%,#ff0 83.33%,#f00 100%)"></div>
<div class="a" style="left:1529.8px;top:180px;width:27.4px;height:28px;background:#fff;border:1px solid #3d3d3d"></div>
<div class="a" style="left:1512px;top:163.4px;width:31.7px;height:30.6px;background:#000;border:1px solid #8c8c8c;box-shadow:inset 0 0 0 2.5px #fff, inset 0 0 0 3.5px #000"></div>
<div class="a" style="left:1504px;top:648px;width:130.4px;height:27.3px;background:#424242;border:1px solid #3b3b3b;border-radius:4px"></div>
<div class="a" style="left:1499.5px;top:681.6px;width:426px;height:2px;background:#444;"></div>
<div class="a" style="left:1504px;top:690px;width:193.2px;height:27.2px;background:#424242;border:1px solid #3b3b3b;border-radius:4px"></div>
<div class="a" style="left:1769.6px;top:691px;width:74.7px;height:23.4px;background:#424242;border:1px solid #3b3b3b;border-radius:4px"></div>
<div class="a" style="left:1822.4px;top:691px;width:1px;height:23.4px;background:#565656;"></div>
<div class="a" style="left:1499.5px;top:722.4px;width:426px;height:2px;background:#444;"></div>
<div class="a" style="left:1769.6px;top:733.7px;width:74.7px;height:22.6px;background:#424242;border:1px solid #3b3b3b;border-radius:4px"></div>
<div class="a" style="left:1822.4px;top:733.7px;width:1px;height:22.6px;background:#565656;"></div>
<div class="a" style="left:1499.5px;top:768.6px;width:426px;height:200.5px;background:#4a4a4a;"></div>
<div class="a" style="left:1499.5px;top:768.6px;width:401.5px;height:152.5px;background:#535353;"></div>
<div class="a" style="left:1544px;top:768.6px;width:357px;height:49.1px;background:#6b6b6b;"></div>
<div class="a" style="left:1499.5px;top:817.7px;width:401.5px;height:1px;background:#474747;"></div>
<div class="a" style="left:1499.5px;top:869px;width:401.5px;height:1px;background:#474747;"></div>
<div class="a" style="left:1499.5px;top:920.6px;width:401.5px;height:1px;background:#474747;"></div>
<div class="a" style="left:1543.5px;top:768.6px;width:1px;height:152.5px;background:#474747;"></div>
<div class="a" style="left:1901px;top:768.6px;width:24px;height:200.5px;background:#4a4a4a;"></div>
<div class="a" style="left:1499.5px;top:969px;width:426px;height:2px;background:#3b3b3b;"></div>
<div class="a" style="left:1550.7px;top:775.8px;width:47.3px;height:36.7px;background:#fff;border:1px solid #222;background-color:#fff;background-image:linear-gradient(45deg,#ccc 25%,transparent 25%,transparent 75%,#ccc 75%),linear-gradient(45deg,#ccc 25%,transparent 25%,transparent 75%,#ccc 75%);background-size:8px 8px;background-position:0 0,4px 4px"></div>
<div class="a" style="left:1550.7px;top:827.2px;width:47.3px;height:36.5px;background:#fff;border:1px solid #222;background-color:#fff;background-image:linear-gradient(45deg,#ccc 25%,transparent 25%,transparent 75%,#ccc 75%),linear-gradient(45deg,#ccc 25%,transparent 25%,transparent 75%,#ccc 75%);background-size:8px 8px;background-position:0 0,4px 4px"></div>
<div class="a" style="left:1558px;top:828.2px;width:33.2px;height:34.5px;background:#f5d400;"></div>
<div class="a" style="left:1550.7px;top:878.2px;width:47.3px;height:36.4px;background:#fff;border:1px solid #222"></div>
<div class="a" style="left:1565px;top:784px;width:18.7px;height:21px;background:#cfe9f7;background:linear-gradient(#8fd0f5 0%,#e8f5fb 45%,#d3e8bf 65%,#cfe6b8 88%,#5cb835 88%)"></div>
<div class="a" style="left:1582.8px;top:784px;width:0.8px;height:21px;background:#333;"></div>
<div class="a" style="left:1567px;top:785px;width:13.5px;height:13.5px;border-radius:50%;background:#8fc23c;box-shadow:inset -1px -1px 0 #3a4a18"></div>
<div class="a" style="left:1572.5px;top:796px;width:2.2px;height:8.5px;background:#e8b777;"></div>
<div class="t" style="left:1536.81px;top:653.33px;font-size:15.08px;font-weight:normal;color:#f0f0f0;transform:scaleX(0.9881);transform-origin:0 0;">Kind</div>
<div class="t" style="left:1515.95px;top:695.23px;font-size:15.08px;font-weight:normal;color:#f0f0f0;transform:scaleX(1.0330);transform-origin:0 0;">Normal</div>
<div class="t" style="left:1707.17px;top:695.23px;font-size:15.08px;font-weight:normal;color:#dcdcdc;transform:scaleX(1.0431);transform-origin:0 0;">Opacity:</div>
<div class="t" style="left:1775.32px;top:695.73px;font-size:15.08px;font-weight:normal;color:#f0f0f0;transform:scaleX(1.0247);transform-origin:0 0;">100%</div>
<div class="t" style="left:1506.68px;top:736.03px;font-size:15.08px;font-weight:normal;color:#dcdcdc;transform:scaleX(1.0978);transform-origin:0 0;">Lock:</div>
<div class="t" style="left:1741.18px;top:736.03px;font-size:15.08px;font-weight:normal;color:#dcdcdc;transform:scaleX(1.0083);transform-origin:0 0;">Fill:</div>
<div class="t" style="left:1775.32px;top:737.03px;font-size:15.08px;font-weight:normal;color:#f0f0f0;transform:scaleX(1.0247);transform-origin:0 0;">100%</div>
<div class="t" style="left:1611.65px;top:785.83px;font-size:15.08px;font-weight:normal;color:#e8e8e8;">tree-pic-sample</div>
<div class="t" style="left:1611.80px;top:836.83px;font-size:15.08px;font-weight:normal;color:#e8e8e8;">yellow-bg-pic-sample</div>
<div class="t" style="left:1611.35px;top:887.83px;font-size:15.08px;font-weight:normal;font-style:italic;color:#e8e8e8;transform:scaleX(0.9893);transform-origin:0 0;">Background</div>
<svg class="o" viewBox="0 0 1926 976"><path d="M1487 93.5 L1483.5 96.8 L1487 100 M1481 93.5 L1477.5 96.8 L1481 100" stroke="#e0e0e0" stroke-width="1.3" fill="none"/><path d="M1907 93.5 L1910.5 96.8 L1907 100 M1913 93.5 L1916.5 96.8 L1913 100" stroke="#e0e0e0" stroke-width="1.3" fill="none"/><rect x="1453" y="111" width="1.2" height="6" fill="#444"/><rect x="1456" y="111" width="1.2" height="6" fill="#444"/><rect x="1459" y="111" width="1.2" height="6" fill="#444"/><rect x="1462" y="111" width="1.2" height="6" fill="#444"/><rect x="1465" y="111" width="1.2" height="6" fill="#444"/><rect x="1468" y="111" width="1.2" height="6" fill="#444"/><rect x="1471" y="111" width="1.2" height="6" fill="#444"/><rect x="1474" y="111" width="1.2" height="6" fill="#444"/><rect x="1477" y="111" width="1.2" height="6" fill="#444"/><rect x="1480" y="111" width="1.2" height="6" fill="#444"/><rect x="1456.8" y="128.5" width="6.2" height="6.2" fill="none" stroke="#d9d9d9" stroke-width="1.4"/><rect x="1456.8" y="137.5" width="6.2" height="6.2" fill="none" stroke="#d9d9d9" stroke-width="1.4"/><rect x="1456" y="146" width="7.8" height="7.5" fill="#d9d9d9"/><path d="M1468.5 151.2 C1476 148 1480 140 1474.8 132.5 L1472.2 134.5 C1476 140 1474 147 1468.5 151.2 Z" fill="#d9d9d9"/><polygon points="1467.8,130 1477.6,130 1469,139.2" fill="#d9d9d9"/><path d="M1458 171 H1475 Q1478 171 1478 174 V183.5 Q1478 186.6 1475 186.6 H1466.2 L1459.8 193.2 V186.6 H1458 Q1455 186.6 1455 183.5 V174 Q1455 171 1458 171 Z" fill="#d9d9d9"/><rect x="1902" y="121.5" width="15" height="1.3" fill="#c8c8c8"/><rect x="1902" y="123.8" width="15" height="1.3" fill="#c8c8c8"/><rect x="1902" y="126.1" width="15" height="1.3" fill="#c8c8c8"/><rect x="1902" y="128.4" width="15" height="1.3" fill="#c8c8c8"/><rect x="1902" y="130.7" width="15" height="1.3" fill="#c8c8c8"/><rect x="1902" y="560.0" width="15" height="1.3" fill="#c8c8c8"/><rect x="1902" y="562.3" width="15" height="1.3" fill="#c8c8c8"/><rect x="1902" y="564.6" width="15" height="1.3" fill="#c8c8c8"/><rect x="1902" y="566.9" width="15" height="1.3" fill="#c8c8c8"/><rect x="1902" y="569.2" width="15" height="1.3" fill="#c8c8c8"/><rect x="1902" y="608.2" width="15" height="1.3" fill="#c8c8c8"/><rect x="1902" y="610.5" width="15" height="1.3" fill="#c8c8c8"/><rect x="1902" y="612.8" width="15" height="1.3" fill="#c8c8c8"/><rect x="1902" y="615.1" width="15" height="1.3" fill="#c8c8c8"/><rect x="1902" y="617.4" width="15" height="1.3" fill="#c8c8c8"/><clipPath id="cf"><rect x="1566" y="158.7" width="281.4" height="350"/></clipPath><circle cx="1566" cy="508.7" r="5.5" fill="none" stroke="#fff" stroke-width="1.2" clip-path="url(#cf)"/><path d="M1859 503.5 H1864 L1869.2 508.7 L1864 514 H1859 Z" fill="#e0e0e0"/><circle cx="1523.5" cy="661" r="5" fill="none" stroke="#d9d9d9" stroke-width="1.8"/><path d="M1527 665 L1532 670" stroke="#d9d9d9" stroke-width="2.4" stroke-linecap="round"/><path d="M1619.75 660.25 L1624.5 664.75 L1629.25 660.25" fill="none" stroke="#b8b8b8" stroke-width="1.2"/><rect x="1653.3" y="653.8" width="17" height="14.5" fill="none" stroke="#d9d9d9" stroke-width="1.5"/><path d="M1655.5 666 L1660 659.5 L1663 663 L1665 660.5 L1668.5 666 Z" fill="#d9d9d9"/><circle cx="1697.5" cy="661" r="7.6" fill="none" stroke="#d9d9d9" stroke-width="1.6"/><path d="M1702.9 655.6 A7.6 7.6 0 0 1 1692.1 666.4 Z" fill="#d9d9d9"/><path d="M1726 658 V654 H1741 V658 M1733.5 654 V668.5 M1730 668.5 H1737" fill="none" stroke="#d9d9d9" stroke-width="2.2"/><rect x="1763" y="654.5" width="14" height="13" fill="none" stroke="#d9d9d9" stroke-width="1.5"/><rect x="1761" y="652.5" width="4" height="4" fill="#535353" stroke="#d9d9d9" stroke-width="1.2"/><rect x="1761" y="665.5" width="4" height="4" fill="#535353" stroke="#d9d9d9" stroke-width="1.2"/><rect x="1775" y="652.5" width="4" height="4" fill="#535353" stroke="#d9d9d9" stroke-width="1.2"/><rect x="1775" y="665.5" width="4" height="4" fill="#535353" stroke="#d9d9d9" stroke-width="1.2"/><path d="M1803.5 653.5 H1809.5 L1814.5 658.5 V668 H1803.5 Z" fill="none" stroke="#d9d9d9" stroke-width="1.5"/><rect x="1799.3" y="661" width="8" height="8" fill="#d9d9d9"/><rect x="1833.5" y="649.5" width="13" height="25" rx="6.5" fill="#444" stroke="#3a3a3a" stroke-width="1"/><circle cx="1839.5" cy="655" r="5.8" fill="#e8e8e8"/><path d="M1681.75 702.25 L1686.5 706.75 L1691.25 702.25" fill="none" stroke="#b8b8b8" stroke-width="1.2"/><path d="M1828.75 702.25 L1833.5 706.75 L1838.25 702.25" fill="none" stroke="#b8b8b8" stroke-width="1.2"/><path d="M1828.75 744.25 L1833.5 748.75 L1838.25 744.25" fill="none" stroke="#b8b8b8" stroke-width="1.2"/><rect x="1557.7" y="737.2" width="4" height="4" fill="#d9d9d9"/><rect x="1557.7" y="741.2" width="4" height="4" fill="#6a6a6a"/><rect x="1557.7" y="745.2" width="4" height="4" fill="#d9d9d9"/><rect x="1557.7" y="749.2" width="4" height="4" fill="#6a6a6a"/><rect x="1561.7" y="737.2" width="4" height="4" fill="#6a6a6a"/><rect x="1561.7" y="741.2" width="4" height="4" fill="#d9d9d9"/><rect x="1561.7" y="745.2" width="4" height="4" fill="#6a6a6a"/><rect x="1561.7" y="749.2" width="4" height="4" fill="#d9d9d9"/><rect x="1565.7" y="737.2" width="4" height="4" fill="#d9d9d9"/><rect x="1565.7" y="741.2" width="4" height="4" fill="#6a6a6a"/><rect x="1565.7" y="745.2" width="4" height="4" fill="#d9d9d9"/><rect x="1565.7" y="749.2" width="4" height="4" fill="#6a6a6a"/><rect x="1569.7" y="737.2" width="4" height="4" fill="#6a6a6a"/><rect x="1569.7" y="741.2" width="4" height="4" fill="#d9d9d9"/><rect x="1569.7" y="745.2" width="4" height="4" fill="#6a6a6a"/><rect x="1569.7" y="749.2" width="4" height="4" fill="#d9d9d9"/><rect x="1557.7" y="737.2" width="16" height="16" fill="none" stroke="#d9d9d9" stroke-width="1"/><g transform="translate(1590.5 753.5) rotate(50) scale(0.8)"><path d="M0 0 C3 -2 5.2 -5 4.8 -8.6 C4.5 -10.8 2.8 -12 0.6 -12 C-2.2 -12 -3.6 -10.3 -3.4 -8 C-3.1 -5 -1.4 -2.6 0 0 Z" fill="#d9d9d9"/><path d="M-1.3 -13.2 L-2.1 -29 Q0 -32.6 2.1 -29 L1.3 -13.2 Z" fill="#d9d9d9"/></g><g fill="#d9d9d9"><rect x="1622.5" y="744.2" width="17" height="1.8"/><rect x="1630.1" y="736.5" width="1.8" height="17"/><polygon points="1631,736 1627,740.5 1635,740.5"/><polygon points="1631,754 1627,749.5 1635,749.5"/><polygon points="1621.3,745 1625.8,741 1625.8,749"/><polygon points="1640.7,745 1636.2,741 1636.2,749"/></g><path d="M1657.5 741 H1669 L1673 745 V752.5 H1657.5 Z" fill="none" stroke="#d9d9d9" stroke-width="1.5"/><path d="M1654 741 H1656 M1657.5 737.5 V739.5 M1673 737.5 V739.5 M1674.5 741 H1676 M1654 752.5 H1656 M1657.5 754 V756 M1673 754 V756 M1674.5 752.5 H1676" stroke="#d9d9d9" stroke-width="1.3"/><path d="M1694 744 V741 A4.2 4.2 0 0 1 1702.4 741 V744" fill="none" stroke="#d9d9d9" stroke-width="1.8"/><rect x="1690.5" y="743.5" width="15.5" height="10.5" rx="1" fill="#d9d9d9"/><circle cx="1698.2" cy="748.8" r="1.7" fill="#535353"/><path d="M1512.6 795.5 Q1522.5 783.0 1532.4 795.5 Q1522.5 808.0 1512.6 795.5 Z" fill="#d9d9d9"/><circle cx="1522.5" cy="795.5" r="3.9" fill="#535353"/><circle cx="1523.9" cy="794.3" r="1.3" fill="#d9d9d9"/><path d="M1512.6 846.5 Q1522.5 834.0 1532.4 846.5 Q1522.5 859.0 1512.6 846.5 Z" fill="#d9d9d9"/><circle cx="1522.5" cy="846.5" r="3.9" fill="#535353"/><circle cx="1523.9" cy="845.3" r="1.3" fill="#d9d9d9"/><path d="M1512.6 897.5 Q1522.5 885.0 1532.4 897.5 Q1522.5 910.0 1512.6 897.5 Z" fill="#d9d9d9"/><circle cx="1522.5" cy="897.5" r="3.9" fill="#535353"/><circle cx="1523.9" cy="896.3" r="1.3" fill="#d9d9d9"/><path d="M1547.3 787.7 V773.3 H1566.2 M1584.8 773.3 H1601 V787.7 M1601 803 V815.7 H1584.8 M1566.2 815.7 H1547.3 V803" fill="none" stroke="#f0f0f0" stroke-width="1.3"/><path d="M1866 841 V838.5 A3.9 3.9 0 0 1 1873.8 838.5 V841" fill="none" stroke="#d9d9d9" stroke-width="1.9"/><rect x="1862.5" y="841" width="15.3" height="13" rx="1" fill="#d9d9d9"/><circle cx="1870.1" cy="848" r="1.8" fill="#535353"/><path d="M1866 893 V890.5 A3.9 3.9 0 0 1 1873.8 890.5 V893" fill="none" stroke="#d9d9d9" stroke-width="1.9"/><rect x="1863.2" y="893.4" width="13.8" height="11.2" rx="1" fill="none" stroke="#d9d9d9" stroke-width="1.7"/><circle cx="1870.1" cy="899.7" r="1.8" fill="#d9d9d9"/></svg>
<svg class="o" viewBox="0 0 1926 976"><defs>
<linearGradient id="sky" x1="0" y1="0" x2="0" y2="1"><stop offset="0" stop-color="#7cc5f0"/><stop offset="0.45" stop-color="#b6def6"/><stop offset="0.7" stop-color="#eef7fc"/><stop offset="1" stop-color="#f4f9fb"/></linearGradient>
<linearGradient id="trk" x1="0" y1="0" x2="1" y2="0"><stop offset="0" stop-color="#e2a767"/><stop offset="0.45" stop-color="#f7d29c"/><stop offset="1" stop-color="#e8b277"/></linearGradient>
<clipPath id="pic"><rect x="515.6" y="343" width="383.2" height="426.2"/></clipPath>
</defs><rect x="235" y="201" width="947" height="713" fill="#161616"/><rect x="236" y="203" width="945" height="709" fill="#fff"/><path d="M362 214 Q362 210 366 210 H1055.4 V903.9 H362 Z" fill="#f5d500"/><rect x="509" y="336" width="397" height="440" fill="#141414"/><g clip-path="url(#pic)"><rect x="515" y="343" width="385" height="427" fill="url(#sky)"/><circle cx="530" cy="395" r="28" fill="#fdfeff"/><circle cx="548" cy="440" r="36" fill="#fdfeff"/><circle cx="530" cy="480" r="30" fill="#fdfeff"/><circle cx="575" cy="470" r="25" fill="#fdfeff"/><circle cx="598" cy="398" r="13" fill="#fdfeff"/><circle cx="628" cy="372" r="24" fill="#fdfeff"/><circle cx="655" cy="366" r="20" fill="#fdfeff"/><circle cx="806" cy="382" r="17" fill="#fdfeff"/><circle cx="820" cy="388" r="12" fill="#fdfeff"/><circle cx="878" cy="398" r="30" fill="#fdfeff"/><circle cx="905" cy="378" r="28" fill="#fdfeff"/><circle cx="852" cy="440" r="30" fill="#fdfeff"/><circle cx="885" cy="455" r="38" fill="#fdfeff"/><circle cx="835" cy="470" r="22" fill="#fdfeff"/><circle cx="900" cy="470" r="25" fill="#fdfeff"/><path d="M515 618 C545 625 580 645 610 654 C640 660 680 640 725 632 C760 640 800 652 827 656 C850 640 880 622 900 612 V770 H515 Z" fill="#dfe6d6"/><path d="M515 640 C560 648 620 662 680 664 C700 668 740 675 790 697 C830 680 870 664 900 656 V770 H515 Z" fill="#d3e8bf"/><path d="M515 736 C620 731 760 737 900 732 V770 H515 Z" fill="#70c542"/><clipPath id="crown"><path d="M667.6 377 A33.6 33.6 0 0 1 723.6 365.4 A64.1 64.1 0 0 1 803.7 419.6 A32.2 32.2 0 0 1 817.8 462 A33.3 33.3 0 0 1 817.8 511.5 A38.9 38.9 0 0 1 801.3 585.4 A34.2 34.2 0 0 1 752 602 A22.7 22.7 0 0 1 723.6 601.8 L670 621 A38.1 38.1 0 0 1 611 623 A52.5 52.5 0 0 1 564 564 A44.0 44.0 0 0 1 561.6 499.7 A45.3 45.3 0 0 1 587.5 422 A15.6 15.6 0 0 1 607 410 A49.5 49.5 0 0 1 667.6 377 Z"/></clipPath><path d="M667.6 377 A33.6 33.6 0 0 1 723.6 365.4 A64.1 64.1 0 0 1 803.7 419.6 A32.2 32.2 0 0 1 817.8 462 A33.3 33.3 0 0 1 817.8 511.5 A38.9 38.9 0 0 1 801.3 585.4 A34.2 34.2 0 0 1 752 602 A22.7 22.7 0 0 1 723.6 601.8 L670 621 A38.1 38.1 0 0 1 611 623 A52.5 52.5 0 0 1 564 564 A44.0 44.0 0 0 1 561.6 499.7 A45.3 45.3 0 0 1 587.5 422 A15.6 15.6 0 0 1 607 410 A49.5 49.5 0 0 1 667.6 377 Z" fill="#a1c63b"/><g clip-path="url(#crown)"><path d="M667.6 377 A33.6 33.6 0 0 1 723.6 365.4 A64.1 64.1 0 0 1 803.7 419.6 A32.2 32.2 0 0 1 817.8 462 A33.3 33.3 0 0 1 817.8 511.5 A38.9 38.9 0 0 1 801.3 585.4 A34.2 34.2 0 0 1 752 602 A22.7 22.7 0 0 1 723.6 601.8 L670 621 A38.1 38.1 0 0 1 611 623 A52.5 52.5 0 0 1 564 564 A44.0 44.0 0 0 1 561.6 499.7 A45.3 45.3 0 0 1 587.5 422 A15.6 15.6 0 0 1 607 410 A49.5 49.5 0 0 1 667.6 377 Z" fill="none" stroke="#86ad33" stroke-width="17" stroke-linejoin="round"/><circle cx="640" cy="402" r="22" fill="#a1c63b"/><circle cx="690" cy="385" r="22" fill="#a1c63b"/><circle cx="580" cy="470" r="18" fill="#a1c63b"/><circle cx="575" cy="525" r="14" fill="#a1c63b"/><circle cx="590" cy="590" r="16" fill="#a1c63b"/><circle cx="760" cy="392" r="16" fill="#a1c63b"/><path d="M545 470 C546 455 555 443 566 438 C560 450 556 465 560 490 C552 488 546 480 545 470 Z" fill="#c9de5a"/><path d="M556 586 C556 575 560 568 566 566 C564 580 568 600 580 612 C566 608 557 598 556 586 Z" fill="#c9de5a"/><path d="M555 512 C556 505 560 500 565 500 C562 510 563 520 570 535 C560 530 555 522 555 512 Z" fill="#c9de5a"/><path d="M612 626 C614 628 620 636 632 640 C624 632 620 628 618 622 Z" fill="#c9de5a"/><path d="M610 392 C615 378 628 368 642 365 C632 372 622 382 618 396 Z" fill="#c9de5a"/><g fill="none" stroke="#86ad33" stroke-width="9" transform="translate(-3 4)"><path d="M700 420 C715 410 735 410 747 415 C758 425 760 440 750 460"/><path d="M752 452 C765 448 780 455 787 471 C790 478 785 483 778 484"/><path d="M790 490 C805 495 812 505 812 516"/><path d="M760 560 C775 565 790 560 800 548"/></g><g fill="none" stroke="#151515" stroke-width="3" stroke-linecap="round"><path d="M700 420 C715 410 735 410 747 415 C758 425 760 440 750 460"/><path d="M752 452 C765 448 780 455 787 471 C790 478 785 483 778 484"/><path d="M790 490 C805 495 812 505 812 516"/><path d="M760 560 C775 565 790 560 800 548"/></g></g><path d="M667.6 377 A33.6 33.6 0 0 1 723.6 365.4 A64.1 64.1 0 0 1 803.7 419.6 A32.2 32.2 0 0 1 817.8 462 A33.3 33.3 0 0 1 817.8 511.5 A38.9 38.9 0 0 1 801.3 585.4 A34.2 34.2 0 0 1 752 602 A22.7 22.7 0 0 1 723.6 601.8 L670 621 A38.1 38.1 0 0 1 611 623 A52.5 52.5 0 0 1 564 564 A44.0 44.0 0 0 1 561.6 499.7 A45.3 45.3 0 0 1 587.5 422 A15.6 15.6 0 0 1 607 410 A49.5 49.5 0 0 1 667.6 377 Z" fill="none" stroke="#151515" stroke-width="3.8" stroke-linejoin="round"/><path d="M645 770 C650 755 664 728 674 705 C680 688 681 655 674 630.7 C671 624 669 620 667.8 617.1 C663 609 660 604 655.5 601.2 C648 598 642 597 638.3 593.8 C634 590 632 585 630.9 577.8 C637 583 643 587 648 588.9 C646 580 644 568 649.3 553.2 C653 562 655 576 659.2 586.4 C662 590 665 592 667.8 592.5 C672 592 676 589 678.9 584 C690 572 704 556 710 535 C713 515 715 494 721 483 C730 485 736 490 735 500 C734 520 730 535 726 548 C730 556 736 558 742 554 C752 546 758 528 759 511 C765 515 766 525 765 537 C770 540 775 541 779 542 C775 552 765 565 750 577 C735 590 722 605 718 628 C716 660 720 690 728 712 C735 730 745 745 752 756 C755 762 757 766 758 770 Z" fill="url(#trk)" stroke="#151515" stroke-width="3.2" stroke-linejoin="round"/><path d="M688 770 C688 752 695 740 708 738 C700 748 702 760 712 770 Z" fill="#e9b677" stroke="#151515" stroke-width="2.6"/><clipPath id="fcl"><path d="M667.6 377 A33.6 33.6 0 0 1 723.6 365.4 A64.1 64.1 0 0 1 803.7 419.6 A32.2 32.2 0 0 1 817.8 462 A33.3 33.3 0 0 1 817.8 511.5 A38.9 38.9 0 0 1 801.3 585.4 A34.2 34.2 0 0 1 752 602 A22.7 22.7 0 0 1 723.6 601.8 L670 621 A38.1 38.1 0 0 1 611 623 A52.5 52.5 0 0 1 564 564 A44.0 44.0 0 0 1 561.6 499.7 A45.3 45.3 0 0 1 587.5 422 A15.6 15.6 0 0 1 607 410 A49.5 49.5 0 0 1 667.6 377 Z"/></clipPath><g clip-path="url(#fcl)"><circle cx="655" cy="452" r="38" fill="#8db436"/><circle cx="625" cy="492" r="24" fill="#8db436"/><circle cx="672" cy="500" r="34" fill="#8db436"/><circle cx="700" cy="470" r="16" fill="#8db436"/><circle cx="697" cy="528" r="14" fill="#8db436"/><circle cx="612" cy="540" r="22" fill="#8db436"/><circle cx="650" cy="550" r="22" fill="#8db436"/><circle cx="583" cy="585" r="22" fill="#8db436"/><circle cx="630" cy="585" r="18" fill="#8db436"/><circle cx="650.4" cy="449.0" r="32.7" fill="#a3c93b"/><circle cx="622.1" cy="490.1" r="20.6" fill="#a3c93b"/><circle cx="667.9" cy="497.3" r="29.2" fill="#a3c93b"/><circle cx="698.1" cy="468.7" r="13.8" fill="#a3c93b"/><circle cx="695.3" cy="526.9" r="12.0" fill="#a3c93b"/><circle cx="609.4" cy="538.2" r="18.9" fill="#a3c93b"/><circle cx="647.4" cy="548.2" r="18.9" fill="#a3c93b"/><circle cx="580.4" cy="583.2" r="18.9" fill="#a3c93b"/><circle cx="627.8" cy="583.6" r="15.5" fill="#a3c93b"/><path d="M627 469 C618 450 620 430 631 421 C640 414 650 410 656 410 C638 418 628 440 634 466 Z" fill="#c9de5a"/><g fill="none" stroke="#151515" stroke-width="3.2" stroke-linecap="round"><path d="M627 469 C618 450 620 430 631 421 C645 410 665 408 678 416 C688 422 693 430 695 439"/><path d="M694 430 C700 420 710 413 720 411"/><path d="M674 464 C685 458 700 456 714 466 C718 470 720 474 720 478"/><path d="M604 498 C603 488 607 478 618 471 C622 470 627 470 630 471"/><path d="M600 540 C598 528 604 518 614 515"/><path d="M575 560 C580 552 590 548 600 550"/><path d="M655 575 C645 565 635 565 625 568"/><path d="M706 524 C702 540 695 552 684 560"/></g></g><clipPath id="brc"><rect x="600" y="540" width="80" height="110"/></clipPath><g clip-path="url(#brc)"><path d="M645 770 C650 755 664 728 674 705 C680 688 681 655 674 630.7 C671 624 669 620 667.8 617.1 C663 609 660 604 655.5 601.2 C648 598 642 597 638.3 593.8 C634 590 632 585 630.9 577.8 C637 583 643 587 648 588.9 C646 580 644 568 649.3 553.2 C653 562 655 576 659.2 586.4 C662 590 665 592 667.8 592.5 C672 592 676 589 678.9 584 C690 572 704 556 710 535 C713 515 715 494 721 483 C730 485 736 490 735 500 C734 520 730 535 726 548 C730 556 736 558 742 554 C752 546 758 528 759 511 C765 515 766 525 765 537 C770 540 775 541 779 542 C775 552 765 565 750 577 C735 590 722 605 718 628 C716 660 720 690 728 712 C735 730 745 745 752 756 C755 762 757 766 758 770 Z" fill="url(#trk)" stroke="#151515" stroke-width="3.2" stroke-linejoin="round"/></g><path d="M652 552 C653 566 657 580 667.8 592.5 C672 593.5 677 590 681 584 L690 560 L670 540 Z" fill="#a1c63b"/><path d="M652 552 C653 566 657 580 667.8 592.5 C672 593.5 677 590 679.5 584" fill="none" stroke="#151515" stroke-width="3"/><path d="M641.3 742.5 Q639.9 726.7 637.4 716.2 Q642.2 728.0 644.6 742.5 Z" fill="#8bd65c"/><path d="M742.3 765.3 Q741.5 755.3 740.1 748.6 Q743.5 756.1 745.3 765.3 Z" fill="#5bb535"/><path d="M550.4 750.7 Q549.5 732.6 547.9 720.5 Q551.2 734.1 552.9 750.7 Z" fill="#4a9f29"/><path d="M884.6 755.3 Q891.9 742.9 905.5 734.6 Q892.2 743.9 886.6 755.3 Z" fill="#5bb535"/><path d="M627.9 742.3 Q628.7 733.6 630.2 727.7 Q631.1 734.3 632.0 742.3 Z" fill="#5bb535"/><path d="M555.2 755.1 Q554.5 745.5 553.3 739.0 Q557.0 746.3 558.9 755.1 Z" fill="#4a9f29"/><path d="M538.2 744.2 Q541.1 728.0 546.5 717.2 Q542.4 729.3 541.0 744.2 Z" fill="#4a9f29"/><path d="M875.1 748.8 Q875.1 738.4 875.0 731.4 Q877.5 739.2 879.1 748.8 Z" fill="#4fa82c"/><path d="M739.0 753.8 Q746.6 735.0 760.7 722.5 Q747.2 736.6 741.7 753.8 Z" fill="#4fa82c"/><path d="M561.0 750.5 Q560.6 733.3 559.7 721.9 Q562.6 734.8 564.2 750.5 Z" fill="#4fa82c"/><path d="M890.2 740.3 Q896.7 725.8 908.9 716.1 Q898.3 727.0 894.2 740.3 Z" fill="#8bd65c"/><path d="M786.2 755.8 Q789.1 741.0 794.7 731.1 Q791.3 742.2 790.2 755.8 Z" fill="#8bd65c"/><path d="M699.9 757.9 Q703.0 749.9 708.7 744.6 Q704.8 750.6 703.5 757.9 Z" fill="#62ba3a"/><path d="M626.0 749.6 Q624.0 733.5 620.4 722.9 Q626.2 734.9 629.1 749.6 Z" fill="#5bb535"/><path d="M753.3 752.8 Q754.0 742.7 755.4 736.0 Q756.3 743.6 757.1 752.8 Z" fill="#62ba3a"/><path d="M667.5 764.1 Q669.1 755.9 672.1 750.4 Q670.9 756.6 670.8 764.1 Z" fill="#5bb535"/><path d="M834.5 763.9 Q836.4 753.0 839.8 745.8 Q837.9 754.0 837.4 763.9 Z" fill="#62ba3a"/><path d="M888.5 742.5 Q888.8 733.0 889.4 726.7 Q890.4 733.8 891.0 742.5 Z" fill="#62ba3a"/><path d="M839.1 743.5 Q838.8 732.5 838.2 725.3 Q840.9 733.5 842.4 743.5 Z" fill="#4a9f29"/><path d="M735.9 766.6 Q739.9 750.3 747.3 739.4 Q741.5 751.6 739.4 766.6 Z" fill="#4fa82c"/><path d="M693.1 764.1 Q700.4 744.4 713.9 731.2 Q701.4 746.0 696.4 764.1 Z" fill="#62ba3a"/><path d="M670.6 741.1 Q669.1 725.5 666.4 715.2 Q670.7 726.8 672.7 741.1 Z" fill="#5bb535"/><path d="M686.8 741.3 Q685.9 726.2 684.1 716.1 Q688.1 727.4 690.2 741.3 Z" fill="#4a9f29"/><path d="M554.6 748.9 Q558.4 741.4 565.6 736.3 Q560.1 742.0 558.1 748.9 Z" fill="#5bb535"/><path d="M762.4 766.7 Q765.7 751.5 771.7 741.4 Q766.6 752.8 764.6 766.7 Z" fill="#62ba3a"/><path d="M902.3 752.0 Q901.3 738.4 899.4 729.3 Q902.8 739.5 904.5 752.0 Z" fill="#8bd65c"/><path d="M803.7 752.4 Q807.7 736.0 815.2 725.1 Q808.7 737.4 806.2 752.4 Z" fill="#4a9f29"/><path d="M656.1 758.7 Q664.3 739.4 679.5 726.6 Q664.8 741.0 658.8 758.7 Z" fill="#4fa82c"/><path d="M786.5 745.8 Q786.3 733.8 786.0 725.8 Q788.8 734.8 790.4 745.8 Z" fill="#4a9f29"/><path d="M726.2 753.1 Q731.2 737.5 740.4 727.1 Q732.9 738.8 730.1 753.1 Z" fill="#5bb535"/><path d="M829.4 762.5 Q829.9 745.6 830.8 734.3 Q831.8 747.0 832.6 762.5 Z" fill="#8bd65c"/><path d="M800.1 767.7 Q803.8 750.1 810.8 738.3 Q804.8 751.5 802.5 767.7 Z" fill="#4a9f29"/><path d="M888.0 751.4 Q899.7 731.8 921.5 718.8 Q900.8 733.5 892.4 751.4 Z" fill="#8bd65c"/><path d="M546.4 741.1 Q547.9 727.7 550.7 718.7 Q549.7 728.8 549.6 741.1 Z" fill="#4a9f29"/><path d="M842.8 752.4 Q850.0 736.6 863.4 726.0 Q850.3 737.9 844.9 752.4 Z" fill="#4fa82c"/><path d="M869.8 761.5 Q873.5 744.4 880.4 733.0 Q874.5 745.8 872.2 761.5 Z" fill="#8bd65c"/><path d="M548.8 766.4 Q552.3 749.7 558.7 738.5 Q554.2 751.1 552.7 766.4 Z" fill="#4fa82c"/><path d="M797.7 743.1 Q797.4 734.2 797.0 728.3 Q800.1 735.0 801.9 743.1 Z" fill="#5bb535"/><path d="M753.5 755.9 Q761.1 742.4 775.1 733.4 Q761.4 743.5 755.8 755.9 Z" fill="#4a9f29"/><path d="M566.1 738.4 Q573.0 718.4 585.8 705.1 Q574.0 720.1 569.4 738.4 Z" fill="#5bb535"/><path d="M684.2 764.2 Q684.5 746.0 685.1 734.0 Q686.1 747.6 686.8 764.2 Z" fill="#8bd65c"/><path d="M710.5 760.9 Q713.5 749.4 719.2 741.7 Q715.6 750.4 714.5 760.9 Z" fill="#4fa82c"/><path d="M869.9 748.6 Q873.8 735.4 881.1 726.5 Q875.9 736.5 874.1 748.6 Z" fill="#62ba3a"/><path d="M837.6 764.3 Q837.3 755.4 836.9 749.5 Q839.4 756.2 840.8 764.3 Z" fill="#62ba3a"/><path d="M817.8 756.3 Q817.3 738.8 816.4 727.2 Q818.8 740.3 820.1 756.3 Z" fill="#4a9f29"/><path d="M797.8 754.7 Q800.7 743.2 805.9 735.5 Q802.3 744.1 801.2 754.7 Z" fill="#4fa82c"/><path d="M859.5 739.7 Q858.4 730.0 856.4 723.5 Q859.9 730.8 861.6 739.7 Z" fill="#62ba3a"/><path d="M734.1 760.8 Q737.7 741.6 744.6 728.7 Q739.4 743.2 737.6 760.8 Z" fill="#4a9f29"/><path d="M751.4 744.0 Q754.0 733.1 758.8 725.9 Q756.1 734.0 755.4 744.0 Z" fill="#4a9f29"/><path d="M882.2 759.0 Q892.8 740.2 912.4 727.7 Q892.9 741.8 884.8 759.0 Z" fill="#4a9f29"/><path d="M863.2 744.1 Q865.4 731.0 869.6 722.2 Q866.9 732.1 866.1 744.1 Z" fill="#8bd65c"/><path d="M543.3 745.2 Q546.2 737.1 551.7 731.6 Q548.3 737.7 547.2 745.2 Z" fill="#5bb535"/><path d="M881.4 757.3 Q882.0 745.3 883.1 737.2 Q883.3 746.3 883.7 757.3 Z" fill="#62ba3a"/><path d="M600.6 766.6 Q603.4 754.1 608.6 745.8 Q605.8 755.2 605.1 766.6 Z" fill="#5bb535"/><path d="M578.0 750.9 Q579.6 736.9 582.5 727.6 Q580.8 738.1 580.4 750.9 Z" fill="#8bd65c"/><path d="M551.0 749.0 Q553.3 737.3 557.7 729.5 Q555.3 738.3 554.7 749.0 Z" fill="#62ba3a"/><path d="M644.3 756.7 Q643.0 742.8 640.6 733.4 Q646.0 743.9 648.7 756.7 Z" fill="#5bb535"/><path d="M894.0 741.1 Q892.8 730.4 890.6 723.3 Q895.4 731.3 897.9 741.1 Z" fill="#8bd65c"/><path d="M809.8 762.6 Q816.5 744.2 828.9 731.9 Q818.2 745.7 814.1 762.6 Z" fill="#62ba3a"/><path d="M573.3 765.6 Q578.9 750.8 589.4 741.0 Q579.4 752.1 575.4 765.6 Z" fill="#4fa82c"/><path d="M826.8 743.5 Q828.0 724.5 830.1 711.8 Q829.1 726.1 828.8 743.5 Z" fill="#4fa82c"/><path d="M827.6 740.5 Q826.0 722.0 822.9 709.7 Q828.8 723.6 831.8 740.5 Z" fill="#62ba3a"/><path d="M519.5 767.8 Q526.4 755.1 539.2 746.6 Q527.6 756.2 523.0 767.8 Z" fill="#4fa82c"/><path d="M720.5 745.2 Q720.3 736.5 720.0 730.7 Q721.6 737.2 722.5 745.2 Z" fill="#5bb535"/><path d="M878.6 756.9 Q878.8 742.6 879.1 733.2 Q880.7 743.8 881.6 756.9 Z" fill="#5bb535"/><path d="M620.5 762.1 Q618.2 741.8 614.0 728.2 Q619.8 743.5 622.5 762.1 Z" fill="#4a9f29"/><path d="M729.9 743.7 Q737.4 730.2 751.4 721.2 Q737.7 731.3 732.1 743.7 Z" fill="#62ba3a"/><path d="M771.0 754.4 Q782.1 735.4 802.7 722.8 Q782.2 737.0 773.7 754.4 Z" fill="#5bb535"/><path d="M898.2 748.3 Q905.2 730.1 918.3 718.0 Q906.4 731.6 901.7 748.3 Z" fill="#62ba3a"/><path d="M900.9 767.5 Q898.5 749.2 894.1 737.0 Q901.1 750.7 904.4 767.5 Z" fill="#8bd65c"/><path d="M683.0 739.7 Q685.3 723.7 689.6 713.0 Q687.0 725.0 686.2 739.7 Z" fill="#8bd65c"/><path d="M748.5 758.8 Q748.5 751.0 748.5 745.8 Q750.1 751.6 751.1 758.8 Z" fill="#4fa82c"/><path d="M617.7 766.9 Q623.0 746.8 633.0 733.5 Q623.9 748.5 620.2 766.9 Z" fill="#8bd65c"/><path d="M600.0 743.5 Q599.1 731.9 597.4 724.1 Q600.8 732.8 602.6 743.5 Z" fill="#5bb535"/><path d="M611.8 761.3 Q615.7 752.9 623.1 747.3 Q616.6 753.6 614.1 761.3 Z" fill="#4a9f29"/><path d="M531.3 738.7 Q531.6 727.5 532.3 720.0 Q533.7 728.4 534.7 738.7 Z" fill="#4a9f29"/><path d="M847.8 742.7 Q856.2 723.7 871.9 711.0 Q857.2 725.3 851.2 742.7 Z" fill="#8bd65c"/><path d="M796.1 752.8 Q799.6 741.9 806.1 734.6 Q800.5 742.8 798.4 752.8 Z" fill="#4a9f29"/><path d="M759.7 760.0 Q759.0 742.1 757.8 730.1 Q761.1 743.6 762.9 760.0 Z" fill="#4a9f29"/><path d="M736.7 762.4 Q739.5 755.0 744.6 750.0 Q741.6 755.6 740.7 762.4 Z" fill="#5bb535"/><path d="M548.2 739.3 Q557.2 723.6 573.9 713.2 Q557.7 724.9 551.1 739.3 Z" fill="#62ba3a"/><path d="M732.8 756.8 Q738.5 741.4 749.1 731.1 Q739.7 742.7 736.0 756.8 Z" fill="#4fa82c"/><path d="M693.2 740.1 Q703.6 720.6 722.8 707.6 Q703.4 722.2 695.4 740.1 Z" fill="#4a9f29"/><path d="M540.8 760.1 Q539.9 749.6 538.2 742.6 Q541.6 750.5 543.4 760.1 Z" fill="#5bb535"/><path d="M605.0 757.5 Q611.5 744.2 623.6 735.4 Q611.9 745.3 607.1 757.5 Z" fill="#8bd65c"/><path d="M814.1 756.5 Q812.8 740.8 810.4 730.4 Q814.4 742.1 816.4 756.5 Z" fill="#8bd65c"/><path d="M769.1 758.8 Q768.5 743.4 767.3 733.1 Q770.5 744.7 772.3 758.8 Z" fill="#62ba3a"/><path d="M619.8 758.2 Q625.8 741.8 636.8 730.9 Q626.6 743.2 622.5 758.2 Z" fill="#4a9f29"/><path d="M626.4 752.0 Q636.8 734.7 656.1 723.1 Q637.4 736.1 629.7 752.0 Z" fill="#8bd65c"/><path d="M896.5 766.1 Q898.0 758.7 900.8 753.7 Q900.3 759.3 900.5 766.1 Z" fill="#62ba3a"/><path d="M902.6 749.6 Q913.4 730.3 933.2 717.4 Q913.1 731.9 904.8 749.6 Z" fill="#4fa82c"/><path d="M570.3 753.7 Q569.5 733.9 568.0 720.8 Q572.1 735.6 574.3 753.7 Z" fill="#4a9f29"/><path d="M624.0 741.4 Q626.8 729.4 632.0 721.3 Q629.0 730.4 628.2 741.4 Z" fill="#62ba3a"/><path d="M524.7 738.1 Q527.4 724.4 532.4 715.3 Q528.7 725.6 527.4 738.1 Z" fill="#5bb535"/><path d="M677.3 749.3 Q678.3 740.5 680.0 734.6 Q679.8 741.2 680.1 749.3 Z" fill="#8bd65c"/><path d="M842.3 741.6 Q849.9 722.2 864.0 709.2 Q851.4 723.8 846.5 741.6 Z" fill="#8bd65c"/><path d="M613.8 739.9 Q620.0 727.6 631.7 719.4 Q620.5 728.6 615.9 739.9 Z" fill="#62ba3a"/><path d="M809.7 763.6 Q808.6 752.7 806.5 745.5 Q811.0 753.6 813.3 763.6 Z" fill="#5bb535"/><path d="M612.2 746.0 Q612.3 732.0 612.3 722.7 Q614.1 733.2 615.1 746.0 Z" fill="#62ba3a"/><path d="M859.9 762.4 Q868.3 746.8 883.9 736.5 Q869.8 748.1 864.2 762.4 Z" fill="#4a9f29"/><path d="M594.3 740.4 Q597.6 720.9 603.6 707.9 Q599.3 722.5 597.8 740.4 Z" fill="#5bb535"/><path d="M766.4 746.6 Q770.7 738.7 778.7 733.5 Q771.5 739.4 768.6 746.6 Z" fill="#62ba3a"/><path d="M676.8 746.5 Q681.2 735.9 689.2 728.8 Q682.8 736.8 680.4 746.5 Z" fill="#62ba3a"/><path d="M770.8 747.0 Q773.1 732.5 777.3 722.8 Q774.2 733.7 773.2 747.0 Z" fill="#5bb535"/><path d="M544.3 753.0 Q549.2 735.1 558.2 723.2 Q550.4 736.6 547.4 753.0 Z" fill="#8bd65c"/><path d="M903.6 751.5 Q903.7 742.5 903.7 736.4 Q905.0 743.2 905.8 751.5 Z" fill="#8bd65c"/><path d="M731.8 747.6 Q737.4 735.5 747.8 727.5 Q738.1 736.5 734.2 747.6 Z" fill="#4fa82c"/><path d="M807.4 750.4 Q810.5 737.7 816.5 729.3 Q811.9 738.8 810.3 750.4 Z" fill="#8bd65c"/><path d="M808.3 752.9 Q810.2 738.2 813.8 728.3 Q812.3 739.4 812.0 752.9 Z" fill="#4a9f29"/><path d="M760.6 763.9 Q761.2 753.8 762.3 747.1 Q762.7 754.7 763.1 763.9 Z" fill="#62ba3a"/><path d="M625 758 C640 752 655 756 665 755 M738 756 C748 754 758 756 765 758" fill="none" stroke="#222" stroke-width="2" stroke-dasharray="3 2"/></g><rect x="8.2" y="173.1" width="62.6" height="119.7" rx="1.5" fill="none" stroke="#e50000" stroke-width="10"/><path d="M88.3 285 L123 286.1 Q126.8 287 125.8 290.2 Q124.8 293.2 121 293.3 L115.2 293.7 L368.9 459.7 Q369 461.5 367.4 461.3 L107.6 305.8 L110.3 313 Q111.2 317 107.6 317.4 Q105 317.6 103.8 315.4 Z" fill="#e50000"/></svg>
</body></html>
